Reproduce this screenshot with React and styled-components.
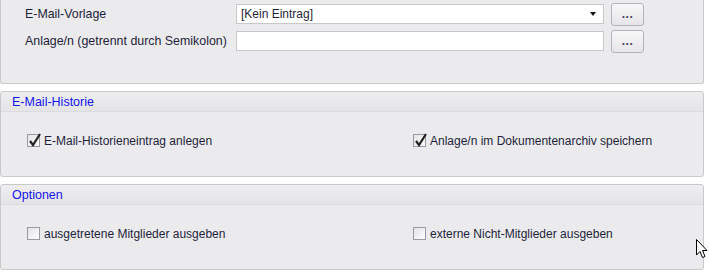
import React from 'react';
import styled, { createGlobalStyle } from 'styled-components';

const GlobalStyle = createGlobalStyle`
  html, body {
    margin: 0;
    padding: 0;
    background: #ffffff;
  }
  body {
    font-family: 'Liberation Sans', Arial, sans-serif;
    font-size: 12px;
    color: #1f1f3a;
  }
`;

const Page = styled.div`
  position: relative;
  width: 709px;
  height: 274px;
  overflow: hidden;
  background: #ffffff;
`;

const Stack = styled.div`
  width: 704px;
  display: flex;
  flex-direction: column;
  gap: 7px;
`;

const Panel = styled.section`
  box-sizing: border-box;
  background: #ebebee;
  border: 1px solid #c9c9cc;
  border-radius: 3px;
  ${props => props.open && `
    border-top: none;
    border-top-left-radius: 0;
    border-top-right-radius: 0;
  `}
`;

const PanelHeader = styled.div`
  height: 19px;
  display: flex;
  align-items: center;
  padding-left: 11px;
  font-size: 12.5px;
  color: #1414f0;
  background: linear-gradient(#eeeef1, #e4e4e7);
  border-bottom: 1px solid #dcdce0;
  border-radius: 3px 3px 0 0;
`;

const FormGrid = styled.div`
  height: 83px;
  box-sizing: border-box;
  display: grid;
  grid-template-columns: 204px 368px 33px;
  grid-auto-rows: 22px;
  column-gap: 7px;
  row-gap: 5px;
  padding: 3px 0 0 24px;
  align-items: center;
`;

const Label = styled.span`
  white-space: nowrap;
  font-size: 12.4px;
`;

const Field = styled.div`
  box-sizing: border-box;
  height: 20px;
  background: #ffffff;
  border: 1px solid #c8c8cb;
  display: flex;
  align-items: center;
  justify-content: space-between;
  padding: 0 7px 0 4px;
`;

const Arrow = styled.span`
  width: 0;
  height: 0;
  border-left: 3px solid transparent;
  border-right: 3px solid transparent;
  border-top: 4px solid #111;
`;

const DotsButton = styled.button`
  box-sizing: border-box;
  height: 23px;
  width: 33px;
  padding: 0 0 4px;
  border: 1px solid #b4b4b8;
  border-radius: 3px;
  background: linear-gradient(#f7f7f8, #e6e6e9);
  font-family: inherit;
  font-size: 12px;
  font-weight: bold;
  letter-spacing: 0.5px;
  color: #404060;
  display: flex;
  align-items: flex-end;
  justify-content: center;
`;

const CheckGrid = styled.div`
  box-sizing: border-box;
  height: 64px;
  padding: 0 0 7px 26px;
  display: grid;
  grid-template-columns: 386px 1fr;
  align-items: center;
`;

const CheckLabel = styled.label`
  display: flex;
  align-items: center;
  gap: 4px;
  white-space: nowrap;
`;

const Box = styled.span`
  box-sizing: border-box;
  width: 13px;
  height: 13px;
  border: 1px solid #9a9aa0;
  background: linear-gradient(135deg, #e2e2e6, #ffffff);
  position: relative;
  flex: none;
`;

const Tick = styled.svg`
  position: absolute;
  left: 0;
  top: -3px;
`;

const Cursor = styled.svg`
  position: absolute;
  left: 696px;
  top: 239px;
`;

function Check({ checked, children }) {
  return (
    <CheckLabel>
      <Box>
        {checked && (
          <Tick width="14" height="15" viewBox="0 0 14 15">
            <path d="M2 9 L5 13 L12 2" fill="none" stroke="#222" strokeWidth="2.2" />
          </Tick>
        )}
      </Box>
      {children}
    </CheckLabel>
  );
}

export default function App() {
  return (
    <Page>
      <GlobalStyle />
      <Stack>
        <Panel open>
          <FormGrid>
            <Label>E-Mail-Vorlage</Label>
            <Field>
              <span>[Kein Eintrag]</span>
              <Arrow />
            </Field>
            <DotsButton>...</DotsButton>
            <Label>Anlage/n (getrennt durch Semikolon)</Label>
            <Field />
            <DotsButton>...</DotsButton>
          </FormGrid>
        </Panel>
        <Panel>
          <PanelHeader>E-Mail-Historie</PanelHeader>
          <CheckGrid>
            <Check checked>E-Mail-Historieneintrag anlegen</Check>
            <Check checked>Anlage/n im Dokumentenarchiv speichern</Check>
          </CheckGrid>
        </Panel>
        <Panel>
          <PanelHeader>Optionen</PanelHeader>
          <CheckGrid>
            <Check>ausgetretene Mitglieder ausgeben</Check>
            <Check>externe Nicht-Mitglieder ausgeben</Check>
          </CheckGrid>
        </Panel>
      </Stack>
      <Cursor width="12" height="20" viewBox="0 0 12 20">
        <path d="M0.5 0.5 L0.5 16 L4 12.5 L6.5 18.5 L9 17.5 L6.5 11.5 L11 11.5 Z" fill="#fff" stroke="#000" strokeWidth="1" />
      </Cursor>
    </Page>
  );
}
